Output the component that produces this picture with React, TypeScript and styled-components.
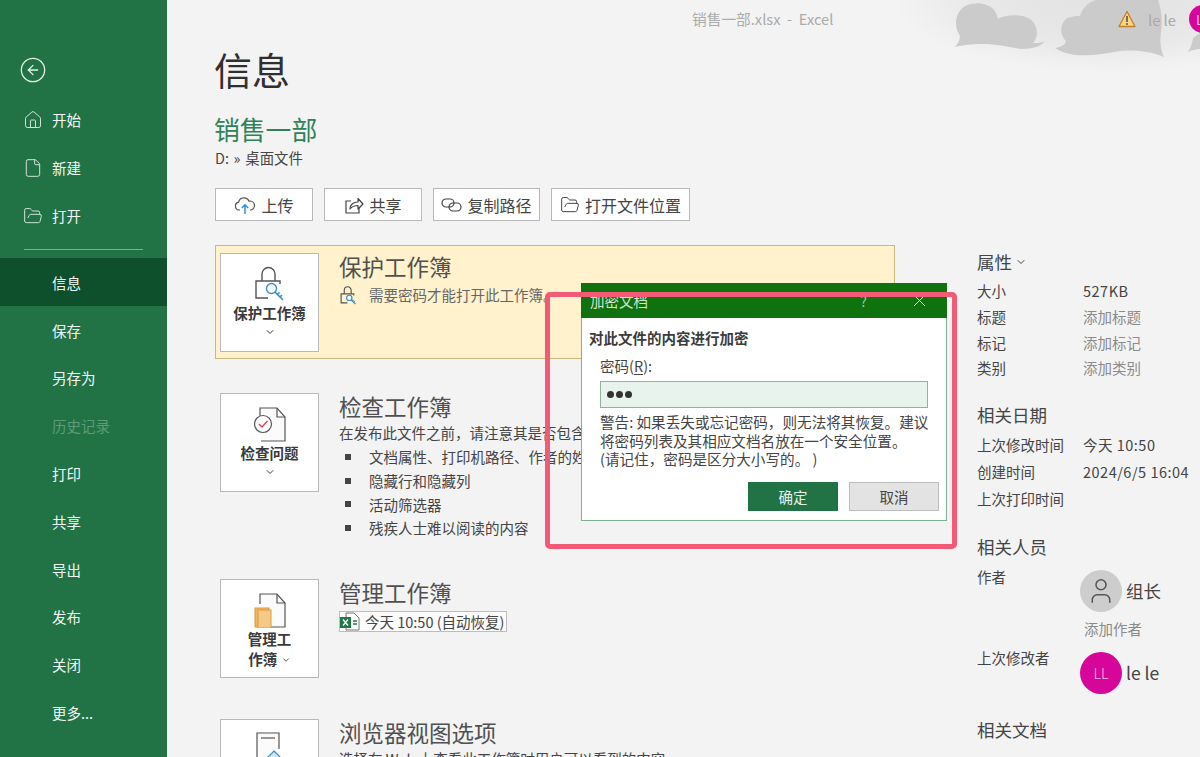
import styled, { createGlobalStyle } from "styled-components";
import { ChevronDown, CircleArrowLeft, File, FolderOpen, House, User } from "lucide-react";

const GlobalStyle = createGlobalStyle`
  html, body {
    margin: 0;
    padding: 0;
    height: 757px;
    overflow: hidden;
    background: #f3f3f3;
    font-family: "Noto Sans CJK SC", "Noto Sans", sans-serif;
    color: #444;
  }
  * { box-sizing: border-box; }
`;

const Page = styled.div`
  width: 1200px;
  height: 757px;
  display: flex;
  position: relative;
  overflow: hidden;
`;

const Sidebar = styled.nav`
  width: 167px;
  flex: none;
  background: #217346;
  color: #fff;
  display: flex;
  flex-direction: column;
  padding-top: 55px;
`;

const BackButton = styled.div`
  padding-left: 19px;
  height: 30px;
  margin-bottom: 11px;
  display: flex;
  align-items: center;
  color: #e4f0e9;
`;

const NavItem = styled.div<{ $active?: boolean; $disabled?: boolean }>`
  height: 47.8px;
  flex: none;
  display: flex;
  align-items: center;
  padding-left: 52px;
  position: relative;
  font-size: 14.5px;
  background: ${({ $active }) => ($active ? "#0e4f2c" : "transparent")};
  color: ${({ $disabled }) => ($disabled ? "#5f9a79" : "#f2f7f4")};
`;

const NavIcon = styled.span`
  position: absolute;
  left: 23px;
  top: 14px;
  display: flex;
  color: #cfe3d8;
`;

const NavDivider = styled.div`
  height: 1px;
  margin: 10px 24px 8px;
  background: #7fae94;
`;

const Main = styled.main`
  flex: 1;
  min-width: 0;
  position: relative;
  overflow: hidden;
`;

const Clouds = styled.svg`
  position: absolute;
  top: 0;
  right: 0;
`;

const TitleBar = styled.header`
  height: 37px;
  position: relative;
  display: flex;
  align-items: center;
  padding-left: 525px;
  font-size: 14.7px;
  color: #ababab;
`;

const AccountArea = styled.div`
  position: absolute;
  top: 5px;
  left: 951px;
  width: 99px;
  height: 28px;
  display: flex;
  align-items: center;
  gap: 12px;
  white-space: nowrap;
  color: #a9a9a9;
`;

const TopAvatar = styled.span`
  width: 28px;
  height: 28px;
  flex: none;
  margin-left: auto;
  border-radius: 50%;
  background: #d6069a;
  color: #f7b9e4;
  font-size: 13px;
  display: flex;
  align-items: center;
  justify-content: center;
`;

const Body = styled.div`
  display: flex;
  padding-left: 48px;
`;

const LeftColumn = styled.div`
  width: 680px;
  flex: none;
`;

const PageTitle = styled.h1`
  margin: 6px 0 0 -1px;
  font-size: 38px;
  font-weight: 400;
  line-height: 52px;
  color: #2f2f2f;
`;

const FileName = styled.div`
  margin: 17px 0 0 -1px;
  font-size: 25.8px;
  line-height: 34px;
  color: #2f8258;
`;

const FilePath = styled.div`
  margin-top: 2px;
  font-size: 14.4px;
  line-height: 20px;
  word-spacing: 1.5px;
  color: #444;
`;

const Actions = styled.div`
  margin-top: 20px;
  display: flex;
  gap: 11px;
`;

const ActionButton = styled.button<{ $width: number }>`
  width: ${({ $width }) => $width}px;
  height: 33px;
  padding: 0;
  display: flex;
  align-items: center;
  justify-content: center;
  gap: 5px;
  background: #fff;
  border: 1px solid #b9b9b9;
  font: inherit;
  font-size: 16px;
  color: #444;
`;

const Sections = styled.div`
  margin-top: 24px;
  display: flex;
  flex-direction: column;
  gap: 26px;
`;

const Section = styled.section<{ $highlight?: boolean }>`
  display: flex;
  gap: 20px;
  padding: 7px 5px 6px 4px;
  border: 1px solid ${({ $highlight }) => ($highlight ? "#c9b97f" : "transparent")};
  background: ${({ $highlight }) => ($highlight ? "#fff2cc" : "transparent")};
`;

const Tile = styled.div`
  width: 99px;
  height: 99px;
  flex: none;
  display: flex;
  flex-direction: column;
  align-items: center;
  padding-top: 12px;
  background: #fff;
  border: 1px solid #b9b9b9;
  font-size: 14.5px;
  line-height: 20px;
  font-weight: 700;
  color: #3a3a3a;
  text-align: center;
`;

const TileLabel = styled.div`
  margin-top: 1px;
`;

const TileChevron = styled(ChevronDown)`
  margin-top: 3px;
`;

const SectionBody = styled.div`
  min-width: 0;
  flex: 1;
`;

const SectionTitle = styled.h2`
  margin: -1px 0 0;
  font-size: 22.5px;
  font-weight: 400;
  line-height: 29px;
  color: #505050;
`;

const Description = styled.div`
  font-size: 14.5px;
  line-height: 24px;
  color: #444;
  white-space: nowrap;
`;

const ProtectNote = styled.div`
  display: flex;
  align-items: center;
  gap: 11px;
  margin-top: 2px;
  font-size: 14.5px;
  line-height: 24px;
  color: #666;
  white-space: nowrap;
`;

const IssueList = styled.ul`
  margin: 0 0 -2px;
  padding: 0;
  list-style: none;
`;

const Issue = styled.li`
  height: 23.7px;
  display: flex;
  align-items: center;
  gap: 16px;
  padding-left: 6px;
  font-size: 14.5px;
  white-space: nowrap;
  &::before {
    content: "";
    width: 6px;
    height: 6px;
    margin-right: 2px;
    flex: none;
    background: #444;
  }
`;

const VersionLink = styled.div`
  margin-top: 4px;
  width: 168px;
  height: 21px;
  display: flex;
  align-items: center;
  gap: 5px;
  background: #fbfbfb;
  border: 1px solid #bdbdbd;
  font-size: 14.5px;
  color: #444;
  white-space: nowrap;
`;

const RightColumn = styled.aside`
  margin-left: 82px;
  padding-top: 213px;
  width: 223px;
  flex: none;
  white-space: nowrap;
`;

const PropHeading = styled.h3<{ $top?: number }>`
  margin: ${({ $top }) => $top ?? 0}px 0 0;
  font-size: 17.5px;
  font-weight: 400;
  line-height: 24px;
  color: #444;
  display: flex;
  align-items: center;
  gap: 3px;
`;

const PropRows = styled.div<{ $top: number; $row: number }>`
  margin-top: ${({ $top }) => $top}px;
  display: grid;
  grid-template-columns: 106px 1fr;
  grid-auto-rows: ${({ $row }) => $row}px;
  align-items: center;
  font-size: 14.5px;
`;

const PropValue = styled.span<{ $muted?: boolean }>`
  color: ${({ $muted }) => ($muted ? "#8a8a8a" : "#444")};
  letter-spacing: ${({ $muted }) => ($muted ? "0" : "0.5px")};
`;

const PersonRow = styled.div<{ $height: number; $top?: number }>`
  display: grid;
  grid-template-columns: 103px 1fr;
  height: ${({ $height }) => $height}px;
  margin-top: ${({ $top }) => $top ?? 0}px;
  font-size: 14.5px;
  line-height: 26px;
`;

const Person = styled.div<{ $top: number }>`
  margin-top: ${({ $top }) => $top}px;
  display: flex;
  align-items: center;
  gap: 4px;
  font-size: 17.5px;
  height: 42px;
`;

const Avatar = styled.span<{ $color: string }>`
  width: 42px;
  height: 42px;
  border-radius: 50%;
  flex: none;
  display: flex;
  align-items: center;
  justify-content: center;
  background: ${({ $color }) => $color};
  color: #f7b9e4;
  font-size: 14.5px;
  font-weight: 300;
`;

const AddAuthor = styled.div`
  padding-left: 107px;
  margin-top: -3px;
  height: 29px;
  font-size: 14.5px;
  line-height: 26px;
  color: #8a8a8a;
`;

const Dialog = styled.div`
  position: absolute;
  left: 581px;
  top: 283px;
  width: 366px;
  height: 238px;
  background: #fff;
  border: 1px solid #7fb08f;
  border-top: none;
  display: flex;
  flex-direction: column;
`;

const DialogBar = styled.div`
  height: 35px;
  flex: none;
  margin: 0 -1px;
  background: #0f720f;
  color: #cfe6cf;
  font-size: 14.5px;
  display: flex;
  align-items: center;
  padding: 0 21px 0 9px;
`;

const DialogTitle = styled.span`
  flex: 1;
`;

const DialogHelp = styled.span`
  margin-right: 46px;
  font-size: 14px;
  color: #9cc69c;
`;

const DialogContent = styled.div`
  padding: 9px 7px 0 7px;
  font-size: 14.5px;
  color: #444;
`;

const DialogHeading = styled.div`
  line-height: 22px;
  font-weight: 700;
  color: #3c3c3c;
`;

const DialogIndent = styled.div`
  padding: 6px 11px 0 11px;
`;

const FieldLabel = styled.label`
  display: block;
  line-height: 22px;
  u {
    text-underline-offset: 2px;
  }
`;

const PasswordBox = styled.div`
  margin-top: 4px;
  height: 27px;
  padding-left: 6px;
  display: flex;
  align-items: center;
  gap: 2px;
  background: #e9f3ed;
  border: 1px solid #8db59d;
`;

const PasswordDot = styled.span`
  width: 7px;
  height: 7px;
  border-radius: 50%;
  background: #333;
`;

const Warning = styled.div`
  margin-top: 5px;
  line-height: 18.5px;
  white-space: nowrap;
  font-size: 14.6px;
`;

const DialogActions = styled.div`
  margin-top: 13px;
  display: flex;
  justify-content: flex-end;
  gap: 11px;
`;

const DialogButton = styled.button<{ $primary?: boolean }>`
  width: 90px;
  height: 29px;
  padding: 0;
  font: inherit;
  font-size: 14.5px;
  background: ${({ $primary }) => ($primary ? "#217346" : "#e3e3e3")};
  color: ${({ $primary }) => ($primary ? "#e6f2eb" : "#444")};
  border: 1px solid ${({ $primary }) => ($primary ? "#217346" : "#bdbdbd")};
`;

const Callout = styled.div`
  position: absolute;
  left: 545px;
  top: 292px;
  width: 412px;
  height: 257px;
  border: 5px solid #f25a75;
  border-radius: 5px;
`;

const navTop = [
  { label: "开始", icon: <House size={20} strokeWidth={1.2} /> },
  { label: "新建", icon: <File size={20} strokeWidth={1.2} /> },
  { label: "打开", icon: <FolderOpen size={20} strokeWidth={1.2} /> },
];

const navBottom = ["保存", "另存为", "历史记录", "打印", "共享", "导出", "发布", "关闭", "更多..."];

const issues = ["文档属性、打印机路径、作者的姓名和其他信息", "隐藏行和隐藏列", "活动筛选器", "残疾人士难以阅读的内容"];

function UploadIcon() {
  return (
    <svg width="22" height="20" viewBox="0 0 22 20" fill="none">
      <path d="M6 15H5a4 4 0 0 1-.4-7.9A5.5 5.5 0 0 1 15 6.2 4.4 4.4 0 0 1 17 15h-1" stroke="#555" strokeWidth="1.2" />
      <path d="M11 19v-9M7.8 13 11 9.8l3.2 3.2" stroke="#2f8fd8" strokeWidth="1.5" />
    </svg>
  );
}

function ShareIcon() {
  return (
    <svg width="20" height="20" viewBox="0 0 20 20" fill="none" stroke="#444" strokeWidth="1.2">
      <path d="M7 6H2v12h13v-5" />
      <path d="M6 14c0-4 3-7 8-7V3.5l5 5.5-5 5v-3.5c-4 0-6 1-8 3.5z" strokeLinejoin="round" />
    </svg>
  );
}

function LinkIcon() {
  return (
    <svg width="21" height="16" viewBox="0 0 21 16" fill="none" stroke="#444" strokeWidth="1.2">
      <rect x="1" y="2" width="12" height="8" rx="4" />
      <rect x="8" y="6" width="12" height="8" rx="4" />
    </svg>
  );
}

function LockKeyIcon({ size }: { size: number }) {
  const line = size < 24 ? 2.2 : 1.4;
  return (
    <svg width={size} height={size} viewBox="0 0 32 36" fill="none">
      <path d="M8 15V8a6.5 6.5 0 0 1 13 0v7" stroke="#555" strokeWidth={line} />
      <path d="M14 32H2V15h24v3" stroke="#555" strokeWidth={line} />
      <circle cx="17.5" cy="22.5" r="5" stroke="#3a8fc8" strokeWidth={line} fill="#fff" />
      <path d="M21 26l8 8M26 31l2-2M23.5 28.5l2-2" stroke="#3a8fc8" strokeWidth={line + 0.3} />
    </svg>
  );
}

function InspectIcon() {
  return (
    <svg width="34" height="36" viewBox="0 0 34 36" fill="none">
      <path d="M7 10V2h17l8 9v24H8" fill="#fbfbfb" stroke="#555" strokeWidth="1.2" />
      <path d="M24 2v9h8" stroke="#555" strokeWidth="1.2" />
      <circle cx="10" cy="18" r="8.5" fill="#fff" stroke="#555" strokeWidth="1.2" />
      <path d="M6 18l3 3 5.5-6" stroke="#d9435a" strokeWidth="1.5" />
    </svg>
  );
}

function ManageIcon() {
  return (
    <svg width="32" height="36" viewBox="0 0 32 36" fill="none">
      <path d="M6 12V2h17l8 9v24H14" fill="#fbfbfb" stroke="#555" strokeWidth="1.2" />
      <path d="M23 2v9h8" stroke="#555" strokeWidth="1.2" />
      <rect x="1" y="16" width="14" height="19" fill="#f1b767" stroke="#e09a3f" />
      <rect x="4" y="18" width="13" height="18" fill="#f6c987" stroke="#e09a3f" />
    </svg>
  );
}

function BrowserIcon() {
  return (
    <svg width="28" height="28" viewBox="0 0 28 28" fill="none">
      <path d="M1 28V1h22v16" fill="#fbfbfb" stroke="#555" strokeWidth="1.2" />
      <path d="M5 6h14" stroke="#555" strokeWidth="1.2" />
      <path d="M18 19l7 7h-4v2h-6v-2h-4z" fill="#cfe6f7" stroke="#2f8fd8" strokeWidth="1.2" />
    </svg>
  );
}

function ExcelFileIcon() {
  return (
    <svg width="20" height="19" viewBox="0 0 20 19" fill="none">
      <path d="M6 1h8l5 5v12H6z" fill="#fff" stroke="#777" />
      <rect x="0" y="5" width="11" height="11" fill="#1d7a45" />
      <path d="M3 7.5l5 6M8 7.5l-5 6" stroke="#fff" strokeWidth="1.4" />
      <path d="M13 9h4M13 12h4" stroke="#1d7a45" strokeWidth="1.4" />
    </svg>
  );
}

function WarningIcon() {
  return (
    <svg width="18" height="18" viewBox="0 0 18 18">
      <path d="M9 1.5 17 16.5H1z" fill="#fbd77f" stroke="#c87d2a" strokeWidth="1.3" strokeLinejoin="round" />
      <path d="M9 6v6" stroke="#555" strokeWidth="1.6" />
      <circle cx="9" cy="14" r="1" fill="#555" />
    </svg>
  );
}

function CloudBackdrop() {
  return (
    <Clouds width="300" height="100" viewBox="0 0 300 100">
      <defs>
        <radialGradient id="haze" cx="0.7" cy="0" r="0.72">
          <stop offset="0" stopColor="#e2e2e2" />
          <stop offset="0.6" stopColor="#e8e8e8" />
          <stop offset="1" stopColor="#f3f3f3" />
        </radialGradient>
      </defs>
      <rect width="300" height="100" fill="url(#haze)" />
      <path
        d="M55 47c4-5 6-9 4-13-4-6-4-16 0-22 5-9 22-12 32-5 4 3 6 7 7 12 8-5 24-5 32 0 8 6 9 18 3 24 5 0 9 0 12-2-3 5-12 8-24 8-12-2-24-5-38-5-12 0-20 1-28 3z"
        fill="#cbcbcb"
      />
      <path
        d="M155 48c6-1 10-3 11-7-4-4-6-10-4-16 2-7 8-9 18-9 2-7 8-14 16-16h62c3 8 5 20 3 32-1 7-1 14 1 20l2 5c-14-6-32-8-50-5-18 3-42 7-59-4z"
        fill="#cbcbcb"
      />
      <path d="M288 52c3-4 4-9 5-14l7-5v16c-4 0-8 1-12 3z" fill="#cbcbcb" />
    </Clouds>
  );
}

export default function App() {
  return (
    <>
      <GlobalStyle />
      <Page>
        <Sidebar>
          <BackButton>
            <CircleArrowLeft size={28} strokeWidth={1.1} />
          </BackButton>
          {navTop.map((item) => (
            <NavItem key={item.label}>
              <NavIcon>{item.icon}</NavIcon>
              {item.label}
            </NavItem>
          ))}
          <NavDivider />
          <NavItem $active>信息</NavItem>
          {navBottom.map((label) => (
            <NavItem key={label} $disabled={label === "历史记录"}>
              {label}
            </NavItem>
          ))}
        </Sidebar>

        <Main>
          <CloudBackdrop />
          <TitleBar>
            销售一部.xlsx&nbsp;&nbsp;-&nbsp;&nbsp;Excel
            <AccountArea>
              <WarningIcon />
              le le
              <TopAvatar>LL</TopAvatar>
            </AccountArea>
          </TitleBar>
          <Body>
            <LeftColumn>
              <PageTitle>信息</PageTitle>
              <FileName>销售一部</FileName>
              <FilePath>D: » 桌面文件</FilePath>
              <Actions>
                <ActionButton $width={98}>
                  <UploadIcon />
                  上传
                </ActionButton>
                <ActionButton $width={98}>
                  <ShareIcon />
                  共享
                </ActionButton>
                <ActionButton $width={107}>
                  <LinkIcon />
                  复制路径
                </ActionButton>
                <ActionButton $width={139}>
                  <FolderOpen size={20} strokeWidth={1.2} />
                  打开文件位置
                </ActionButton>
              </Actions>

              <Sections>
                <Section $highlight>
                  <Tile>
                    <LockKeyIcon size={36} />
                    <TileLabel>保护工作簿</TileLabel>
                    <TileChevron size={12} />
                  </Tile>
                  <SectionBody>
                    <SectionTitle>保护工作簿</SectionTitle>
                    <ProtectNote>
                      <LockKeyIcon size={19} />
                      需要密码才能打开此工作簿。
                    </ProtectNote>
                  </SectionBody>
                </Section>

                <Section>
                  <Tile>
                    <InspectIcon />
                    <TileLabel>检查问题</TileLabel>
                    <TileChevron size={12} />
                  </Tile>
                  <SectionBody>
                    <SectionTitle>检查工作簿</SectionTitle>
                    <Description>在发布此文件之前，请注意其是否包含:</Description>
                    <IssueList>
                      {issues.map((issue) => (
                        <Issue key={issue}>{issue}</Issue>
                      ))}
                    </IssueList>
                  </SectionBody>
                </Section>

                <Section>
                  <Tile>
                    <ManageIcon />
                    <TileLabel>
                      管理工
                      <br />
                      作簿 <ChevronDown size={10} />
                    </TileLabel>
                  </Tile>
                  <SectionBody>
                    <SectionTitle>管理工作簿</SectionTitle>
                    <VersionLink>
                      <ExcelFileIcon />
                      今天 10:50 (自动恢复)
                    </VersionLink>
                  </SectionBody>
                </Section>

                <Section>
                  <Tile>
                    <BrowserIcon />
                  </Tile>
                  <SectionBody>
                    <SectionTitle>浏览器视图选项</SectionTitle>
                    <Description>选择在 Web 上查看此工作簿时用户可以看到的内容。</Description>
                  </SectionBody>
                </Section>
              </Sections>
            </LeftColumn>

            <RightColumn>
              <PropHeading>
                属性 <ChevronDown size={12} />
              </PropHeading>
              <PropRows $top={4} $row={25.7}>
                <span>大小</span>
                <PropValue>527KB</PropValue>
                <span>标题</span>
                <PropValue $muted>添加标题</PropValue>
                <span>标记</span>
                <PropValue $muted>添加标记</PropValue>
                <span>类别</span>
                <PropValue $muted>添加类别</PropValue>
              </PropRows>

              <PropHeading $top={22}>相关日期</PropHeading>
              <PropRows $top={4} $row={27}>
                <span>上次修改时间</span>
                <PropValue>今天 10:50</PropValue>
                <span>创建时间</span>
                <PropValue>2024/6/5 16:04</PropValue>
                <span>上次打印时间</span>
                <span />
              </PropRows>

              <PropHeading $top={23}>相关人员</PropHeading>
              <PersonRow $height={55} $top={5}>
                <span>作者</span>
                <Person $top={6}>
                  <Avatar $color="#cdcdcd">
                    <User size={30} color="#555" strokeWidth={1.2} />
                  </Avatar>
                  组长
                </Person>
              </PersonRow>
              <AddAuthor>添加作者</AddAuthor>
              <PersonRow $height={73}>
                <span>上次修改者</span>
                <Person $top={7}>
                  <Avatar $color="#d6069a">LL</Avatar>
                  le le
                </Person>
              </PersonRow>
              <PropHeading>相关文档</PropHeading>
            </RightColumn>
          </Body>
        </Main>

        <Dialog>
          <DialogBar>
            <DialogTitle>加密文档</DialogTitle>
            <DialogHelp>?</DialogHelp>
            <svg width="13" height="13" viewBox="0 0 13 13" stroke="#e3f1e3" strokeWidth="1">
              <path d="M1 1l11 11M12 1 1 12" />
            </svg>
          </DialogBar>
          <DialogContent>
            <DialogHeading>对此文件的内容进行加密</DialogHeading>
            <DialogIndent>
              <FieldLabel>
                密码(<u>R</u>):
              </FieldLabel>
              <PasswordBox>
                <PasswordDot />
                <PasswordDot />
                <PasswordDot />
              </PasswordBox>
              <Warning>
                警告: 如果丢失或忘记密码，则无法将其恢复。建议
                <br />
                将密码列表及其相应文档名放在一个安全位置。
                <br />
                (请记住，密码是区分大小写的。 )
              </Warning>
            </DialogIndent>
            <DialogActions>
              <DialogButton $primary>确定</DialogButton>
              <DialogButton>取消</DialogButton>
            </DialogActions>
          </DialogContent>
        </Dialog>
        <Callout />
      </Page>
    </>
  );
}
